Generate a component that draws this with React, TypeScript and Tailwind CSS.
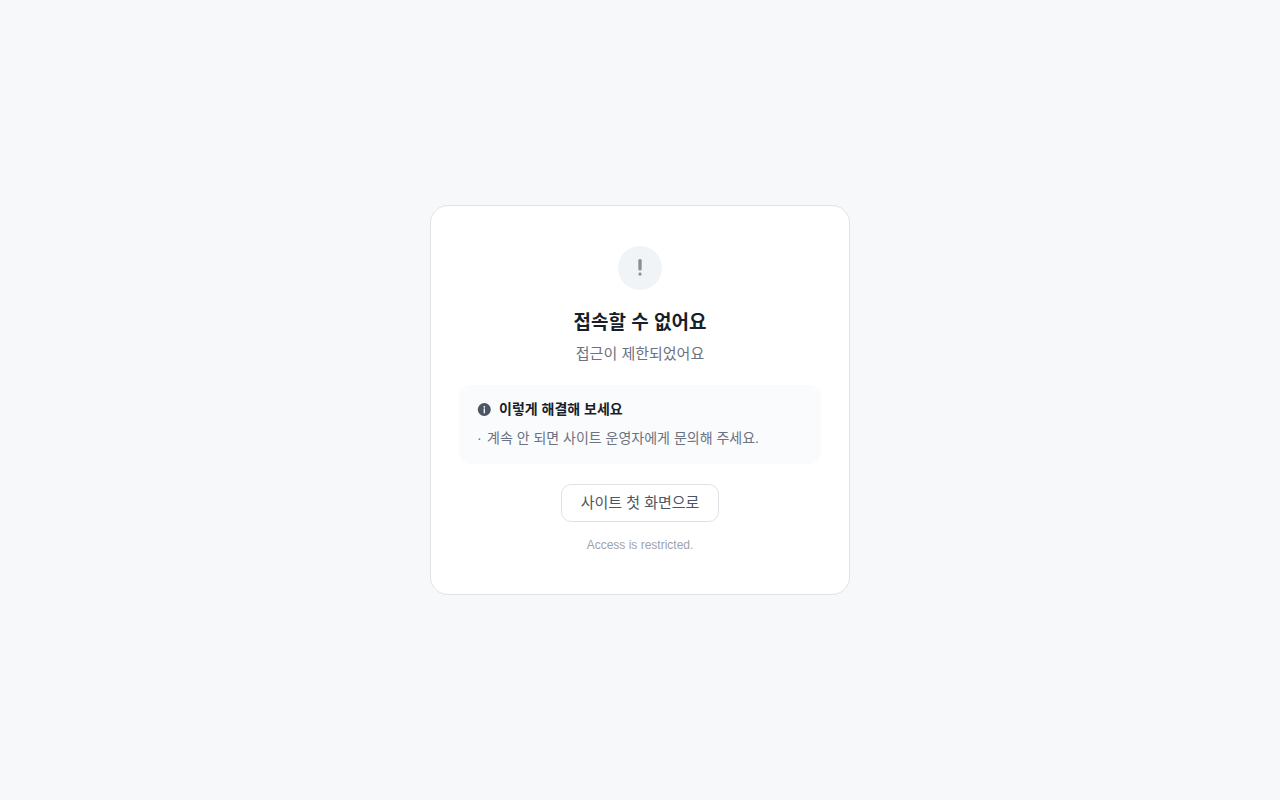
const tips = ['계속 안 되면 사이트 운영자에게 문의해 주세요.'];

function AlertMark() {
  return (
    <div className="flex size-11 items-center justify-center rounded-full bg-[#f1f4f6]">
      <svg className="size-5" viewBox="0 0 20 20" fill="#8b9097" role="img" aria-label="알림">
        <rect x="8.3" y="1" width="3.4" height="11.4" rx="1.5" />
        <rect x="8.5" y="14.6" width="3" height="3" rx="1.2" />
      </svg>
    </div>
  );
}

function InfoIcon() {
  return (
    <svg className="size-3.5" viewBox="0 0 14 14" aria-hidden="true">
      <circle cx="7.3" cy="6.5" r="6.5" fill="#4b5563" />
      <circle cx="7.3" cy="3.8" r="0.9" fill="#fff" />
      <path d="M7.3 6v3.8" stroke="#fff" strokeWidth="1.3" strokeLinecap="round" />
    </svg>
  );
}

export default function App() {
  return (
    <div className="flex min-h-screen items-center justify-center bg-[#f7f8fa] p-5 font-['Liberation_Sans','Noto_Sans_CJK_KR',sans-serif]">
      <main className="flex w-full max-w-[420px] flex-col items-center rounded-[18px] border border-[#e0e4e8] bg-white px-7 py-10">
        <AlertMark />
        <h1 className="mt-[17px] text-[19px] leading-8 font-bold text-[#191f28]">접속할 수 없어요</h1>
        <p className="mt-1 text-[15px] leading-[22px] text-[#6b7280]">접근이 제한되었어요</p>

        <section className="mt-5 w-full rounded-xl bg-[#fafbfd] px-[18px] pt-3.5 pb-4">
          <h2 className="flex items-center gap-2 text-sm leading-[21px] font-bold text-[#191f28]">
            <InfoIcon />
            이렇게 해결해 보세요
          </h2>
          <ul className="mt-2 text-sm leading-5 text-[#6b7280]">
            {tips.map((tip) => (
              <li key={tip} className="flex">
                <span aria-hidden="true" className="w-2.5">·</span>
                {tip}
              </li>
            ))}
          </ul>
        </section>

        <a href="/" className="mt-5 rounded-[10px] border border-[#dfe3e8] bg-white px-[19px] py-2 text-[15px] leading-5 text-[#4b5563]">
          사이트 첫 화면으로
        </a>
        <p className="mt-3.5 text-xs leading-[18px] text-[#9ca3af]">Access is restricted.</p>
      </main>
    </div>
  );
}
